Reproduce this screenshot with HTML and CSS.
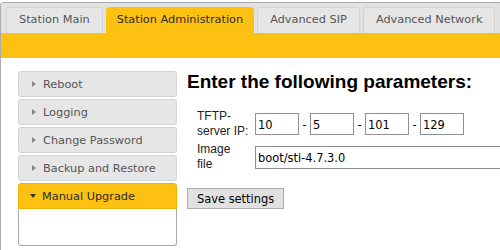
FILE: index.html
```html
<!DOCTYPE html>
<html lang="en">
<head>
  <meta charset="UTF-8" />
  <title>Station Administration</title>
  <link rel="stylesheet" href="styles.css">
</head>
<body>
  <div class="tabs">
    <ul class="tab-nav">
      <li class="tab">Station Main</li>
      <li class="tab active">Station Administration</li>
      <li class="tab">Advanced SIP</li>
      <li class="tab">Advanced Network</li>
    </ul>
    <div class="tab-bar"></div>

    <div class="tab-panel">
      <ul class="menu">
        <li class="menu-item"><span class="arrow"></span>Reboot</li>
        <li class="menu-item"><span class="arrow"></span>Logging</li>
        <li class="menu-item"><span class="arrow"></span>Change Password</li>
        <li class="menu-item"><span class="arrow"></span>Backup and Restore</li>
        <li class="menu-item open"><span class="arrow"></span>Manual Upgrade</li>
        <li class="menu-body"></li>
      </ul>

      <div class="main">
        <h2>Enter the following parameters:</h2>
        <div class="form">
          <label class="label">TFTP-server IP:</label>
          <div class="ip">
            <input class="field octet" type="text" value="10">
            <span class="dash">-</span>
            <input class="field octet" type="text" value="5">
            <span class="dash">-</span>
            <input class="field octet" type="text" value="101">
            <span class="dash">-</span>
            <input class="field octet" type="text" value="129">
          </div>
          <label class="label">Image file</label>
          <div>
            <input class="field file" type="text" value="boot/sti-4.7.3.0">
          </div>
        </div>
        <button class="save">Save settings</button>
      </div>
    </div>
  </div>
</body>
</html>
```

FILE: styles.css
```css
* {
  box-sizing: border-box;
}
body {
  margin: 0;
  padding-top: 2px;
  overflow: hidden;
  font-family: 'DejaVu Sans', Verdana, sans-serif;
  background: #fff;
}
.tabs {
  width: 100%;
  height: 260px;
  border: 1px solid #aaa;
  border-right: none;
  border-radius: 4px 0 0 4px;
  background: #fff;
  overflow: hidden;
}
.tab-nav {
  list-style: none;
  margin: 0;
  padding: 4px 0 0 5px;
  display: flex;
  gap: 3px;
  background: #e2e2e2;
  border-radius: 4px 0 0 0;
}
.tab {
  height: 26px;
  line-height: 24px;
  padding: 0 12px;
  font-size: 11.3px;
  color: #555;
  background: #e6e6e6;
  border: 1px solid #d3d3d3;
  border-bottom: none;
  border-radius: 4px 4px 0 0;
  white-space: nowrap;
  flex-shrink: 0;
}
.tab.active {
  background: #fdc112;
  border-color: #fdc112;
  color: #2b2b2b;
  padding: 0 10px;
}
.tab-bar {
  height: 25px;
  background: #fdc112;
}

.tab-panel {
  display: flex;
  gap: 10px;
  padding: 13px 0 0 17px;
}
.menu {
  list-style: none;
  margin: 0;
  padding: 0;
  width: 159px;
  flex-shrink: 0;
}
.menu-item {
  display: flex;
  align-items: center;
  height: 26px;
  margin-bottom: 2px;
  padding-left: 13px;
  font-size: 11.3px;
  color: #555;
  background: #e6e6e6;
  border: 1px solid #d3d3d3;
  border-radius: 3px;
}
.arrow {
  width: 0;
  height: 0;
  margin-right: 7px;
  border-top: 3.5px solid transparent;
  border-bottom: 3.5px solid transparent;
  border-left: 4px solid #888;
}
.menu-item.open {
  margin-bottom: 0;
  padding-left: 11px;
  color: #2b2b2b;
  background: #fdc112;
  border-color: #f0b400;
  border-radius: 3px 3px 0 0;
}
.menu-item.open .arrow {
  margin-right: 6px;
  border-left: 3.5px solid transparent;
  border-right: 3.5px solid transparent;
  border-top: 4px solid #333;
  border-bottom: none;
}
.menu-body {
  height: 37px;
  border: 1px solid #aaa;
  border-top: none;
  border-radius: 0 0 3px 3px;
  background: #fff;
}

.main {
  flex: 1;
  min-width: 0;
  overflow: hidden;
}
.main h2 {
  margin: 0;
  font-family: 'Liberation Sans', Arial, sans-serif;
  font-size: 19px;
  line-height: 21px;
  color: #000;
  white-space: nowrap;
}
.form {
  display: grid;
  grid-template-columns: 58px auto;
  row-gap: 3px;
  align-items: center;
  margin: 17px 0 0 10px;
}
.label {
  width: 51.6px;
  font-family: 'Liberation Sans', Arial, sans-serif;
  font-size: 12px;
  line-height: 15px;
  color: #222;
}
.ip {
  display: flex;
  align-items: center;
}
.field {
  height: 22px;
  margin: 0;
  padding: 0 2px;
  font-family: 'DejaVu Sans Condensed', 'DejaVu Sans', sans-serif;
  font-size: 12.7px;
  color: #000;
  border: 1px solid #8f8f8f;
  background: #fff;
}
.octet {
  width: 44px;
}
.dash {
  width: 11px;
  text-align: center;
  font-family: 'DejaVu Sans Condensed', 'DejaVu Sans', sans-serif;
  font-size: 12.7px;
}
.file {
  width: 300px;
  height: 23px;
}
.save {
  margin-top: 16px;
  height: 21px;
  padding: 0 9px;
  font-family: 'DejaVu Sans Condensed', 'DejaVu Sans', sans-serif;
  font-size: 12.7px;
  color: #000;
  background: #e1e1e1;
  border: 1px solid #adadad;
}
```
